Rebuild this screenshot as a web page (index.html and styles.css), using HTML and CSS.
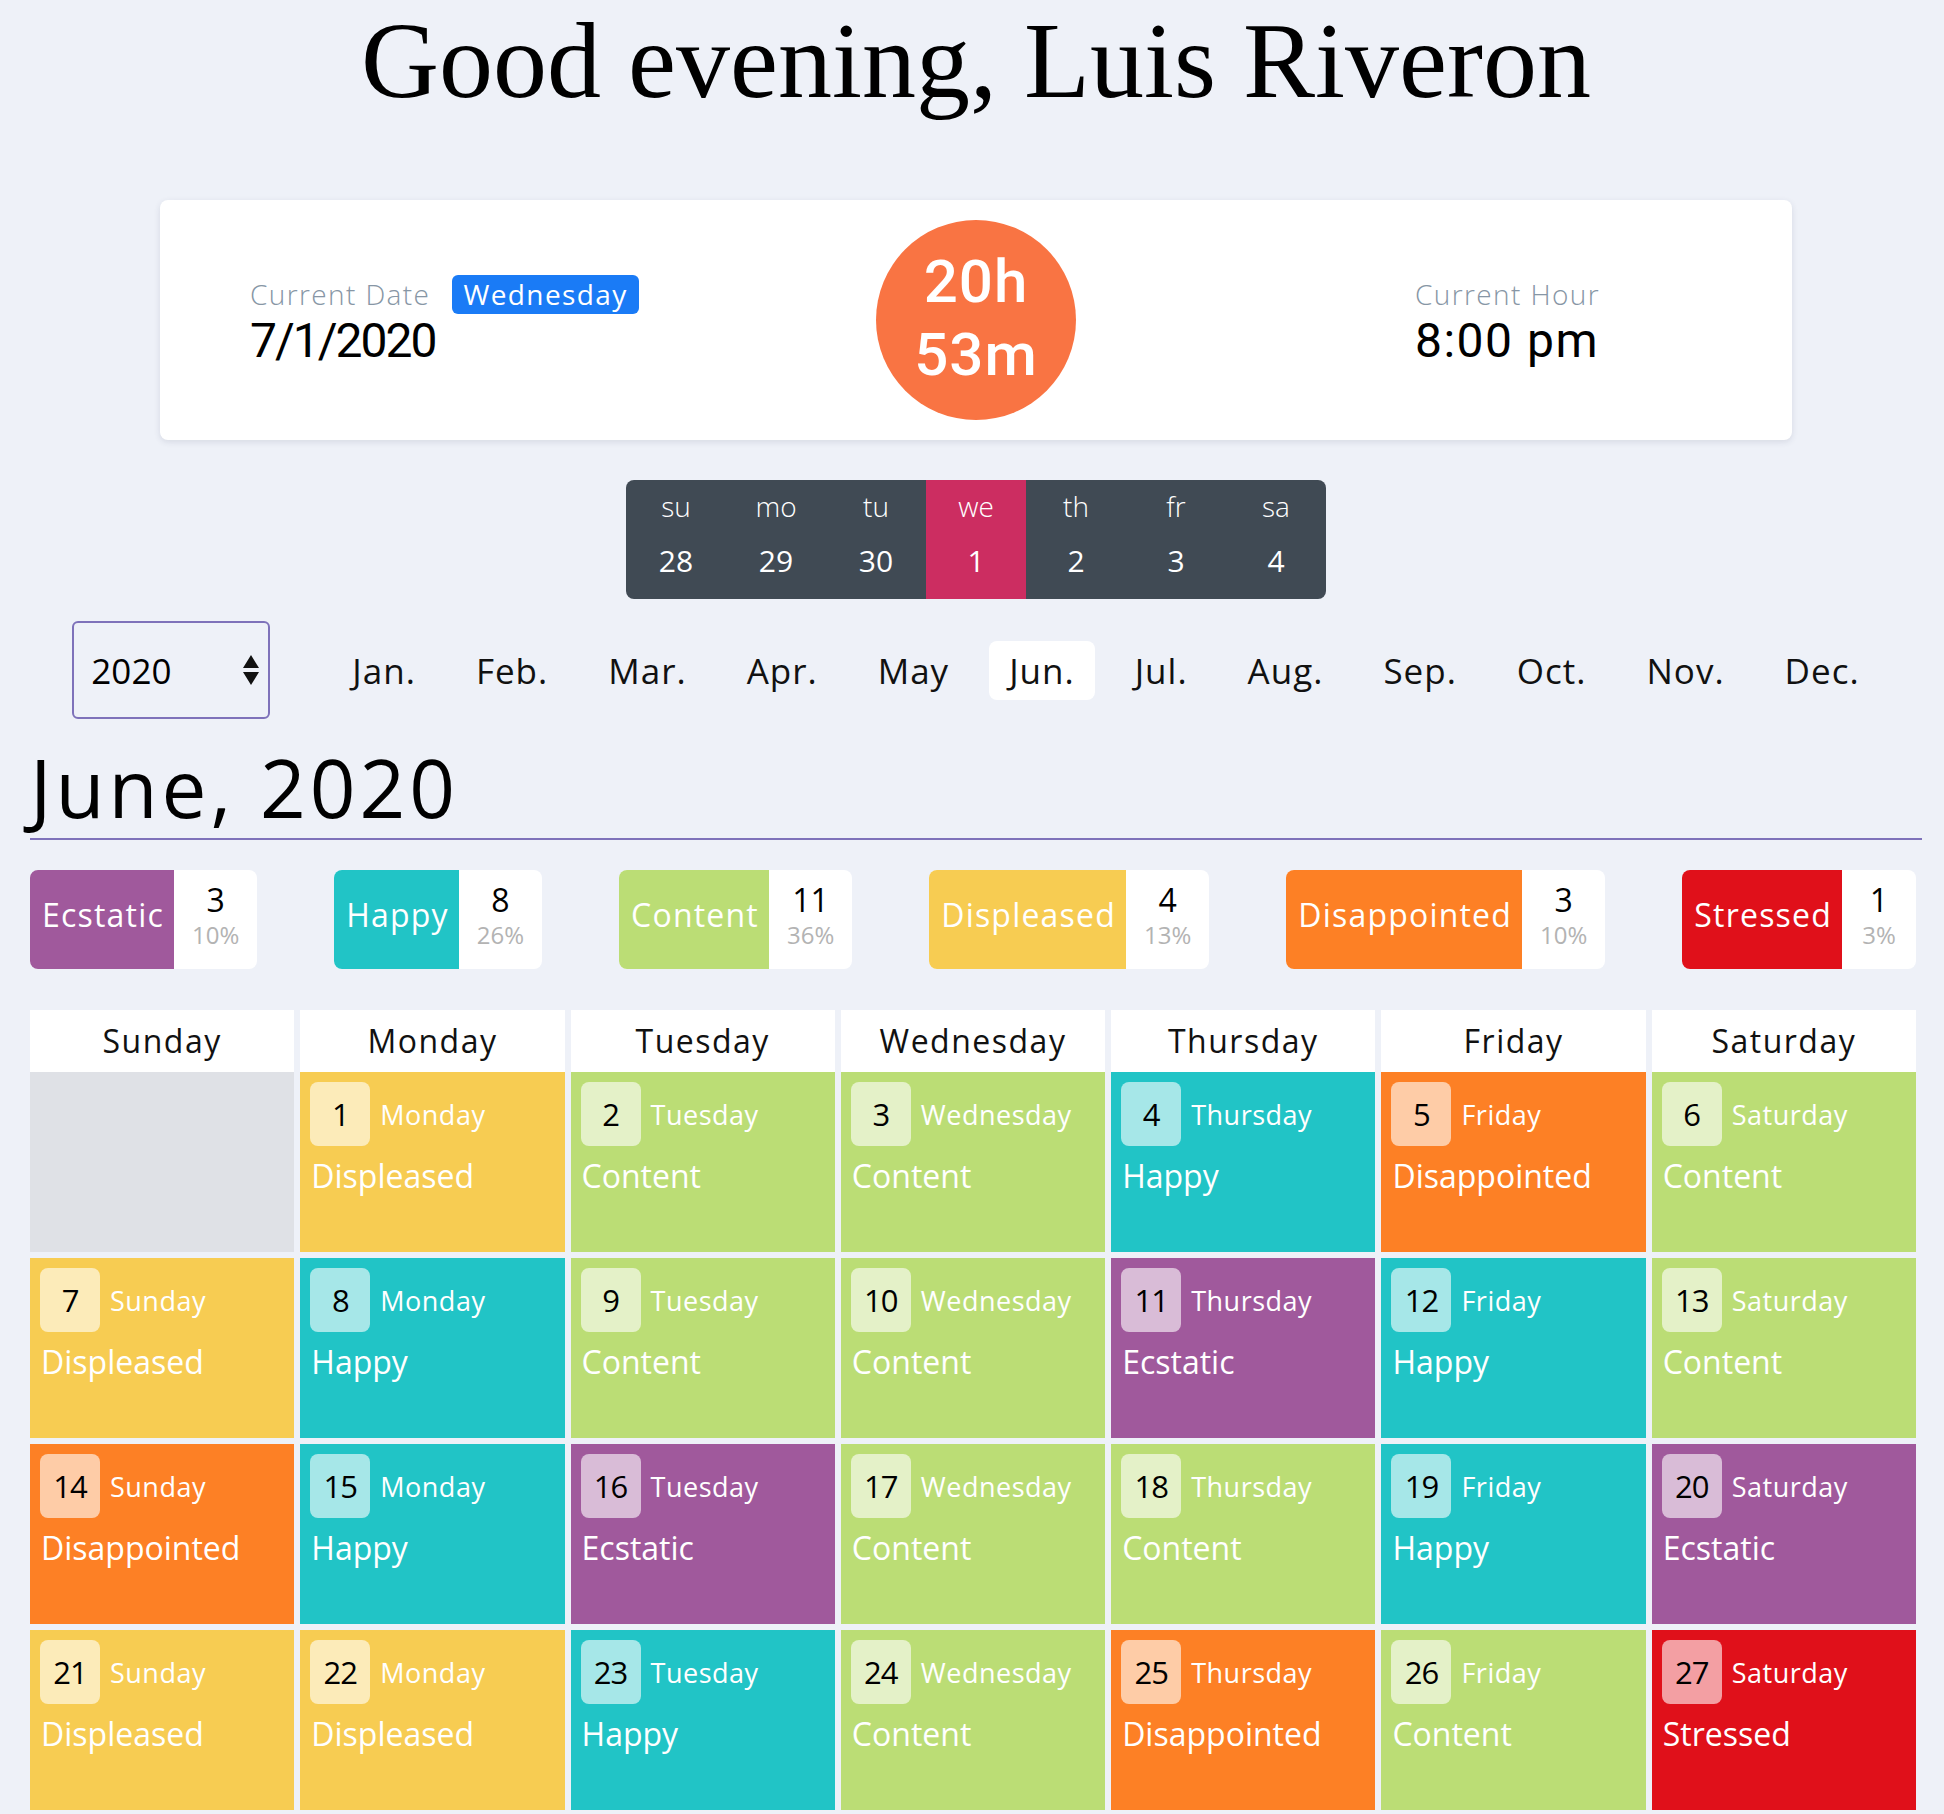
FILE: index.html
```html
<!DOCTYPE html>
<html lang="en">
<head>
<meta charset="utf-8">
<title>Mood Calendar</title>
<link rel="stylesheet" href="styles.css">
</head>
<body>
<div class="top">
  <h1 class="greeting">Good evening, Luis Riveron</h1>
  <section class="now-card">
    <div class="now-block now-date">
      <div class="label-row"><span class="label">Current Date</span><span class="day-badge">Wednesday</span></div>
      <div class="value value-date">7/1/2020</div>
    </div>
    <div class="countdown"><div class="countdown-text"><span>20h</span><span>53m</span></div></div>
    <div class="now-block now-hour">
      <div class="label-row"><span class="label">Current Hour</span></div>
      <div class="value value-hour">8:00 pm</div>
    </div>
  </section>
  <div class="week">
    <div class="wk"><span class="wk-name">su</span><span class="wk-num">28</span></div>
    <div class="wk"><span class="wk-name">mo</span><span class="wk-num">29</span></div>
    <div class="wk"><span class="wk-name">tu</span><span class="wk-num">30</span></div>
    <div class="wk wk-today"><span class="wk-name">we</span><span class="wk-num">1</span></div>
    <div class="wk"><span class="wk-name">th</span><span class="wk-num">2</span></div>
    <div class="wk"><span class="wk-name">fr</span><span class="wk-num">3</span></div>
    <div class="wk"><span class="wk-name">sa</span><span class="wk-num">4</span></div>
  </div>
  <nav class="month-bar">
    <div class="year-select"><span>2020</span>
      <svg class="spin" width="16" height="30" viewBox="0 0 16 30"><path d="M8 0 L16 13 H0 Z M0 17 H16 L8 30 Z" fill="#111"/></svg>
    </div>
    <div class="months">
      <span class="month">Jan.</span><span class="month">Feb.</span><span class="month">Mar.</span><span class="month">Apr.</span><span class="month">May</span><span class="month month-active">Jun.</span><span class="month">Jul.</span><span class="month">Aug.</span><span class="month">Sep.</span><span class="month">Oct.</span><span class="month">Nov.</span><span class="month">Dec.</span>
    </div>
  </nav>
</div>

<main class="main">
  <h2 class="month-title">June, 2020</h2>
  <div class="legend">
    <div class="lg lg-ecstatic"><span class="lg-name">Ecstatic</span><span class="lg-count"><b>3</b><i>10%</i></span></div>
    <div class="lg lg-happy"><span class="lg-name">Happy</span><span class="lg-count"><b>8</b><i>26%</i></span></div>
    <div class="lg lg-content"><span class="lg-name">Content</span><span class="lg-count"><b>11</b><i>36%</i></span></div>
    <div class="lg lg-displeased"><span class="lg-name">Displeased</span><span class="lg-count"><b>4</b><i>13%</i></span></div>
    <div class="lg lg-disappointed"><span class="lg-name">Disappointed</span><span class="lg-count"><b>3</b><i>10%</i></span></div>
    <div class="lg lg-stressed"><span class="lg-name">Stressed</span><span class="lg-count"><b>1</b><i>3%</i></span></div>
  </div>

  <div class="cal-head">
    <div>Sunday</div><div>Monday</div><div>Tuesday</div><div>Wednesday</div><div>Thursday</div><div>Friday</div><div>Saturday</div>
  </div>
  <div class="cal">
    <div class="cell cell-empty"></div>
    <div class="cell displeased"><div class="cell-top"><span class="num">1</span><span class="dname">Monday</span></div><div class="mood">Displeased</div></div>
    <div class="cell content"><div class="cell-top"><span class="num">2</span><span class="dname">Tuesday</span></div><div class="mood">Content</div></div>
    <div class="cell content"><div class="cell-top"><span class="num">3</span><span class="dname">Wednesday</span></div><div class="mood">Content</div></div>
    <div class="cell happy"><div class="cell-top"><span class="num">4</span><span class="dname">Thursday</span></div><div class="mood">Happy</div></div>
    <div class="cell disappointed"><div class="cell-top"><span class="num">5</span><span class="dname">Friday</span></div><div class="mood">Disappointed</div></div>
    <div class="cell content"><div class="cell-top"><span class="num">6</span><span class="dname">Saturday</span></div><div class="mood">Content</div></div>

    <div class="cell displeased"><div class="cell-top"><span class="num">7</span><span class="dname">Sunday</span></div><div class="mood">Displeased</div></div>
    <div class="cell happy"><div class="cell-top"><span class="num">8</span><span class="dname">Monday</span></div><div class="mood">Happy</div></div>
    <div class="cell content"><div class="cell-top"><span class="num">9</span><span class="dname">Tuesday</span></div><div class="mood">Content</div></div>
    <div class="cell content"><div class="cell-top"><span class="num">10</span><span class="dname">Wednesday</span></div><div class="mood">Content</div></div>
    <div class="cell ecstatic"><div class="cell-top"><span class="num">11</span><span class="dname">Thursday</span></div><div class="mood">Ecstatic</div></div>
    <div class="cell happy"><div class="cell-top"><span class="num">12</span><span class="dname">Friday</span></div><div class="mood">Happy</div></div>
    <div class="cell content"><div class="cell-top"><span class="num">13</span><span class="dname">Saturday</span></div><div class="mood">Content</div></div>

    <div class="cell disappointed"><div class="cell-top"><span class="num">14</span><span class="dname">Sunday</span></div><div class="mood">Disappointed</div></div>
    <div class="cell happy"><div class="cell-top"><span class="num">15</span><span class="dname">Monday</span></div><div class="mood">Happy</div></div>
    <div class="cell ecstatic"><div class="cell-top"><span class="num">16</span><span class="dname">Tuesday</span></div><div class="mood">Ecstatic</div></div>
    <div class="cell content"><div class="cell-top"><span class="num">17</span><span class="dname">Wednesday</span></div><div class="mood">Content</div></div>
    <div class="cell content"><div class="cell-top"><span class="num">18</span><span class="dname">Thursday</span></div><div class="mood">Content</div></div>
    <div class="cell happy"><div class="cell-top"><span class="num">19</span><span class="dname">Friday</span></div><div class="mood">Happy</div></div>
    <div class="cell ecstatic"><div class="cell-top"><span class="num">20</span><span class="dname">Saturday</span></div><div class="mood">Ecstatic</div></div>

    <div class="cell displeased"><div class="cell-top"><span class="num">21</span><span class="dname">Sunday</span></div><div class="mood">Displeased</div></div>
    <div class="cell displeased"><div class="cell-top"><span class="num">22</span><span class="dname">Monday</span></div><div class="mood">Displeased</div></div>
    <div class="cell happy"><div class="cell-top"><span class="num">23</span><span class="dname">Tuesday</span></div><div class="mood">Happy</div></div>
    <div class="cell content"><div class="cell-top"><span class="num">24</span><span class="dname">Wednesday</span></div><div class="mood">Content</div></div>
    <div class="cell disappointed"><div class="cell-top"><span class="num">25</span><span class="dname">Thursday</span></div><div class="mood">Disappointed</div></div>
    <div class="cell content"><div class="cell-top"><span class="num">26</span><span class="dname">Friday</span></div><div class="mood">Content</div></div>
    <div class="cell stressed"><div class="cell-top"><span class="num">27</span><span class="dname">Saturday</span></div><div class="mood">Stressed</div></div>
  </div>
</main>
</body>
</html>
```

FILE: styles.css
```css
* { box-sizing: border-box; }
html, body { margin: 0; padding: 0; }
body {
  background: #eef1f8;
  font-family: "Open Sans", "Noto Sans", sans-serif;
  color: #000;
  height: 1814px;
  overflow: hidden;
}

.top { padding-left: 8px; }

.greeting {
  margin: 7px 0 0;
  font-family: "Liberation Serif", "DejaVu Serif", serif;
  font-weight: 400;
  font-size: 108px;
  line-height: 108px;
  text-align: center;
  color: #000;
}

.now-card {
  width: 1632px;
  height: 240px;
  margin: 85px auto 0;
  background: #fff;
  border-radius: 8px;
  box-shadow: 0 2px 6px rgba(40, 50, 80, 0.12);
  display: grid;
  grid-template-columns: 1fr 200px 1fr;
  align-items: center;
}
.now-block { margin-bottom: 0; }
.now-date { padding-left: 90px; }
.now-hour { padding-left: 339px; }
.label-row { display: flex; align-items: center; gap: 22px; height: 40px; }
.label { font-size: 28px; line-height: 40px; font-weight: 300; color: #8796a5; letter-spacing: 1.4px; }
.day-badge {
  background: #1a7bf6;
  color: #fff;
  font-size: 28px;
  line-height: 39px;
  padding: 0 11px;
  border-radius: 6px;
  letter-spacing: 1.4px;
}
.value {
  font-family: Roboto, "Open Sans", sans-serif;
  font-size: 48px;
  line-height: 50px;
  font-weight: 400;
  color: #000;
  margin-top: 2px;
}
.value-date { letter-spacing: -2px; }
.value-hour { letter-spacing: 1.5px; }

.countdown {
  width: 200px;
  height: 200px;
  border-radius: 50%;
  background: #f97443;
  display: flex;
  align-items: center;
  justify-content: center;
}
.countdown-text {
  display: flex;
  flex-direction: column;
  align-items: center;
  color: #fff;
  font-family: Roboto, "Open Sans", sans-serif;
  font-size: 60px;
  line-height: 73px;
  font-weight: 500;
  margin-top: -4px;
  letter-spacing: 1px;
}

.week {
  width: 700px;
  margin: 40px auto 0;
  background: #404a54;
  border-radius: 8px;
  overflow: hidden;
  display: flex;
}
.wk {
  width: 100px;
  display: flex;
  flex-direction: column;
  align-items: center;
  padding: 8px 0 18px;
  color: #fff;
}
.wk-today { background: #cc2d61; }
.wk-name { font-size: 28px; line-height: 36px; font-weight: 300; }
.wk-num { font-size: 30px; line-height: 40px; margin-top: 17px; }

.month-bar {
  margin-top: 22px;
  display: flex;
  align-items: center;
  justify-content: center;
}
.year-select {
  width: 198px;
  height: 98px;
  border: 2px solid #7e72ba;
  border-radius: 6px;
  display: flex;
  align-items: center;
  justify-content: space-between;
  padding: 0 9px 0 17px;
  font-size: 35px;
  color: #000;
  margin-right: 62px;
}
.spin { display: block; }
.months { display: flex; gap: 20px; }
.month {
  font-size: 35px;
  line-height: 59px;
  padding: 0 20px;
  border-radius: 8px;
  color: #111;
  letter-spacing: 1px;
}
.month-active { background: #fff; }

.main { padding-left: 30px; width: 1922px; }
.month-title {
  margin: 18px 0 0;
  font-size: 80px;
  line-height: 100px;
  font-weight: 400;
  letter-spacing: 4px;
  padding-bottom: 1px;
  border-bottom: 2px solid #7e72ba;
}

.legend {
  width: 1886px;
  margin-top: 30px;
  display: flex;
  justify-content: space-between;
}
.lg {
  display: flex;
  height: 99px;
  border-radius: 8px;
  overflow: hidden;
  background: #fff;
}
.lg-name {
  display: flex;
  align-items: center;
  padding: 0 10px 10px 12px;
  font-size: 32px;
  color: #fff;
  letter-spacing: 1.2px;
}
.lg-count {
  display: flex;
  flex-direction: column;
  align-items: center;
  justify-content: center;
  padding: 0 18px;
  min-width: 74px;
}
.lg-count b { font-weight: 500; font-size: 32px; line-height: 30px; color: #000; }
.lg-count i { font-style: normal; font-size: 24px; line-height: 40px; color: #b3b3b3; }
.lg-ecstatic .lg-name { background: #a0599c; }
.lg-happy .lg-name { background: #21c4c6; }
.lg-content .lg-name { background: #bbdd75; }
.lg-displeased .lg-name { background: #f7cc52; }
.lg-disappointed .lg-name { background: #fd8025; }
.lg-stressed .lg-name { background: #e0101a; }

.cal-head, .cal {
  width: 1886px;
  display: grid;
  grid-template-columns: repeat(7, 1fr);
  column-gap: 6px;
}
.cal-head { margin-top: 41px; }
.cal-head div {
  background: #fff;
  height: 62px;
  line-height: 62px;
  text-align: center;
  font-size: 32px;
  color: #111;
  letter-spacing: 1.5px;
}
.cal { row-gap: 6px; grid-auto-rows: 180px; }
.cell { padding: 10px; color: #fff; }
.cell-empty { background: #dfe1e6; }
.cell-top { display: flex; align-items: center; height: 64px; }
.num {
  width: 60px;
  height: 64px;
  border-radius: 8px;
  background: rgba(255, 255, 255, 0.6);
  color: #000;
  font-size: 31px;
  font-weight: 500;
  display: flex;
  align-items: center;
  justify-content: center;
  letter-spacing: -1px;
}
.dname { margin-left: 10px; font-size: 27px; letter-spacing: 0.5px; }
.mood { margin-top: 10px; padding-left: 1px; font-size: 32px; line-height: 40px; }

.ecstatic { background: #a0599c; }
.happy { background: #21c4c6; }
.content { background: #bbdd75; }
.displeased { background: #f7cc52; }
.disappointed { background: #fd8025; }
.stressed { background: #e0101a; }
```
